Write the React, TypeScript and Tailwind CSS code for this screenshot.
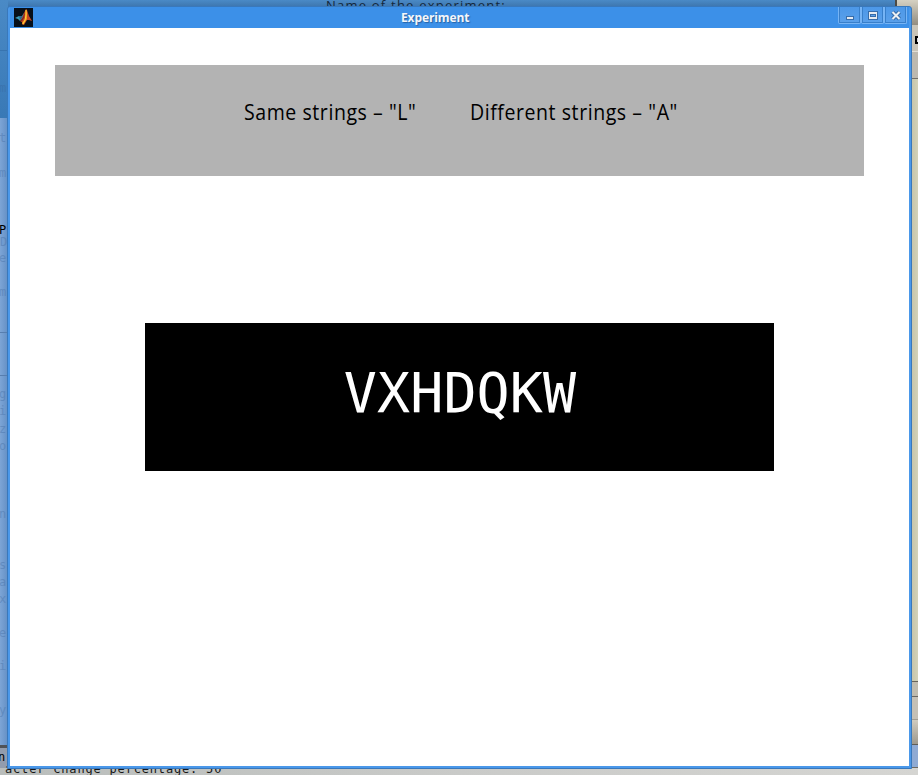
import React from "react";

const strip = [
  ["m", 81], ["t", 131], ["m", 166], ["e", 251], ["m", 285], ["g", 387], ["i", 404], ["z", 422],
  ["o", 439], ["n", 507], ["s", 558], ["a", 575], ["x", 592], ["e", 626], ["i", 659], ["y", 703],
] as const;

function MatlabIcon() {
  return (
    <svg className="block h-[19px] w-[19px] shrink-0" viewBox="0 0 19 19">
      <rect width="19" height="19" fill="#07101a" />
      <path d="M1 10 L5 8 L8 8 L10 5 L9 10 L6 13 L4 11 Z" fill="#389bb8" />
      <path d="M5 8 L8 8 L10 5 L8 10 L6 12 Z" fill="#2b6889" />
      <path d="M6 13 L8 10 L10 5 L12 1 L13 2 L15 8 L18 13 L15 12 L13 12 L10 17 L8 16 L8 14 Z" fill="#c84620" />
      <path d="M12 1 L13 5 L13 11 L9 17 L8 15 L11 11 Z" fill="#ef9b20" />
      <path d="M12 2 L12 7 L11 12 L9 16" fill="none" stroke="#ffd13b" />
      <path d="M6 13 L9 9 L11 4 L10 10 L8 13 Z" fill="#7d2924" />
    </svg>
  );
}

function WindowButton({ kind }: { kind: "min" | "max" | "close" }) {
  return (
    <button className="h-[17px] w-[23px] shrink-0 rounded-b-[2px] border border-t-0 border-[#76b4f5] bg-gradient-to-b from-[#4c98e8] to-[#5aa0ea]" aria-label={kind}>
      <svg className="block h-[16px] w-[21px]" viewBox="0 0 21 16" shapeRendering="crispEdges">
        <rect x=".5" y="-1" width="20" height="16.5" fill="none" stroke="#387fca" />
        <g transform="translate(1 0)">
        {kind === "min" && <rect x="6.5" y="9.5" width="7" height="3" fill="#e5eaf0" stroke="#376ca9" />}
        {kind === "max" && (
          <>
            <rect x="5.5" y="4.5" width="9" height="8" fill="#e5eaf0" stroke="#376ca9" />
            <rect x="7.5" y="7.5" width="5" height="2" fill="#5aa0ea" stroke="#376ca9" />
          </>
        )}
        {kind === "close" && (
          <g shapeRendering="auto">
            <path d="M6.5 5 L13.5 12 M13.5 5 L6.5 12" stroke="#376ca9" strokeWidth="4" />
            <path d="M6.5 5 L13.5 12 M13.5 5 L6.5 12" stroke="#edf0f3" strokeWidth="2" />
          </g>
        )}
        </g>
      </svg>
    </button>
  );
}

function Backdrop() {
  return (
    <div className="flex h-full w-full flex-col">
      <div className="flex min-h-0 flex-1">
        <div className="flex w-[8px] flex-col">
          <div className="h-[118px] bg-gradient-to-b from-[#4a8ac6] to-[#3979b6]" />
          <div className="flex-1 bg-gradient-to-r from-[#7da5d6] to-[#638fc4]" />
          <div className="h-[23px] border-t-[3px] border-[#505358] bg-[#929cad]" />
        </div>
        <div className="h-[7px] w-[887px] bg-gradient-to-b from-[#4a8ac6] to-[#3d75ad]" />
        <div className="flex flex-1 flex-col border-l-2 border-[#4d4a44] bg-[#bdb8a9]">
          <div className="h-[25px] bg-gradient-to-b from-[#d5d1c3] to-[#938d80]" />
          <div className="h-[27px] border-b border-[#e3dfd5] bg-[#c9c4b7]" />
          <div className="h-[27px] border-b border-[#716e68] bg-[#bdb9af]" />
          <div className="flex-1 border-b border-[#666259] bg-gradient-to-r from-[#a9a68e] to-[#d3d2b8]" />
          <div className="h-[15px] border-b border-[#696661] bg-[#bfbbae]" />
          <div className="h-[23px] border-b border-[#a29d92] bg-[#c5c0b5]" />
          <div className="h-[25px] border-b border-[#605d57] bg-gradient-to-b from-[#d0cbbf] to-[#9e998d]" />
          <div className="h-[23px] border-b border-[#6c6962] bg-[#8faad3]" />
        </div>
      </div>
      <div className="h-[7px] bg-gradient-to-r from-[#b9bdbb] via-[#c9cac8] to-[#d5d5d2]" />
    </div>
  );
}

export default function App() {
  return (
    <main className="relative h-[775px] w-[918px] overflow-hidden bg-[#4a86bf] font-['Noto_Sans',sans-serif]">
      <Backdrop />
      <div className="absolute inset-0 font-['DejaVu_Sans_Mono',monospace] text-[12px] leading-[14px] text-[#355f95]">
        {strip.map(([letter, top]) => (
          <span key={top} className="absolute left-[-1px] opacity-30" style={{ top }}>{letter}</span>
        ))}
        <span className="absolute left-0 top-[236px] leading-[12px] opacity-30">D</span>
        <span className="absolute left-[-1px] top-[225px] leading-[10px] text-black">P</span>
        <span className="absolute left-[-2px] top-[750px] text-black">n</span>
        <div className="absolute left-0 top-[50px] h-px w-[8px] bg-[#3874af]" />
        <div className="absolute left-0 top-[332px] h-px w-[8px] bg-[#577eaf]" />
        <div className="absolute left-0 top-[375px] h-px w-[8px] bg-[#577eaf]" />
        <div className="absolute left-[915px] top-[36px] h-[8px] w-[5px] border-2 border-black bg-[#ddd]" />
        <span className="absolute left-[326px] top-[-2px] whitespace-pre font-['Open_Sans',sans-serif] text-[13px] tracking-[1.22px] text-[#13283d]">Name of the experiment:</span>
        <span className="absolute left-[5px] top-[762px] whitespace-pre font-['DejaVu_Sans_Mono',monospace] text-[12px] tracking-[0.82px] text-[#161616]">acter change percentage. 50</span>
      </div>
      <section className="absolute left-[7px] top-[6px] flex h-[763px] w-[905px] flex-col rounded-t-[3px] border border-[#3978bb] bg-[#4a98ea] px-[2px] pb-[2px]">
        <header className="relative flex h-[21px] shrink-0 items-center bg-[#3c90e8] pl-[4px]">
          <MatlabIcon />
          <h1 className="absolute left-[391px] top-[2px] font-['Open_Sans',sans-serif] text-[12px] font-bold leading-[18px] tracking-[-0.1px] text-[#f4f6fa] [text-shadow:1px_1px_1px_#2764a5]">Experiment</h1>
          <div className="ml-auto flex self-start pr-[2px]">
            <WindowButton kind="min" />
            <WindowButton kind="max" />
            <WindowButton kind="close" />
          </div>
        </header>
        <div className="flex flex-1 flex-col bg-white pl-[45px] pt-[37px]">
          <div className="flex h-[111px] w-[809px] whitespace-pre bg-[#b3b3b3] pl-[189px] pt-[33px] font-['Open_Sans',sans-serif] text-[21px] leading-[28px] text-black">
            <span className="w-[226px] origin-left scale-x-[0.93] tracking-[0.6px]">Same strings – "L"</span>
            <span className="origin-left scale-x-[0.93] tracking-[0.6px]">Different strings – "A"</span>
          </div>
          <div className="ml-[90px] mt-[147px] flex h-[148px] w-[629px] justify-center bg-black pl-px pt-[35px] font-['DejaVu_Sans_Mono',monospace] text-[55px] leading-[70px] tracking-[0.1px] text-white">
            VXHDQKW
          </div>
        </div>
      </section>
    </main>
  );
}
